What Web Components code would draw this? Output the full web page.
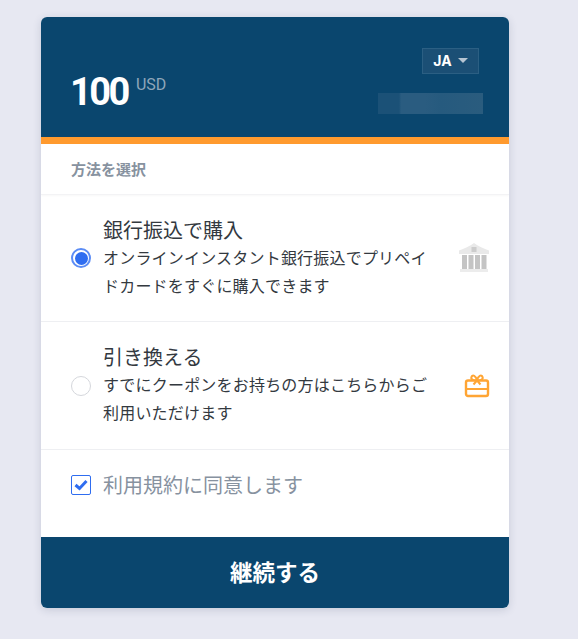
<!DOCTYPE html>
<html lang="ja">
<head>
<meta charset="utf-8">
<title>Purchase</title>
<style>
    html, body { margin: 0; background: #e7e8f2; }
    body { font-family: "Noto Sans CJK JP", "Noto Sans", sans-serif; height: 639px; overflow: hidden; }
</style>
</head>
<body>
<pay-card>
    <pay-header slot="header" amount="100" currency="USD" lang-code="JA"></pay-header>
    <pay-section slot="body">方法を選択</pay-section>
    <pay-option slot="body" title="銀行振込で購入" checked icon="bank">オンラインインスタント銀行振込でプリペイドカードをすぐに購入できます</pay-option>
    <pay-option slot="body" title="引き換える" icon="gift">すでにクーポンをお持ちの方はこちらからご利用いただけます</pay-option>
    <pay-terms slot="body">利用規約に同意します</pay-terms>
    <pay-button slot="footer">継続する</pay-button>
</pay-card>

<script>
const icons = {
    bank: `<svg width="32" height="30" viewBox="0 0 32 30">
        <path d="M16 0 C20 3 26 6 31 7.500 V11 H1 V7.500 C6 6 12 3 16 0 Z" fill="#e9e9e9"/>
        <rect x="13.500" y="4" width="5" height="5" fill="#cccccc"/>
        <g fill="#c4c4c4">
            <rect x="4" y="12" width="5" height="14"/>
            <rect x="10.500" y="12" width="5" height="14"/>
            <rect x="17" y="12" width="5" height="14"/>
            <rect x="23.500" y="12" width="5" height="14"/>
        </g>
        <rect x="2" y="26" width="28" height="3" fill="#ececec"/>
    </svg>`,
    gift: `<svg width="26" height="24" viewBox="0 0 26 24" fill="none" stroke="#ffa534" stroke-width="2.400">
        <rect x="2" y="6.500" width="22" height="15.500" rx="2"/>
        <path d="M2 15 H24" stroke-width="2"/>
        <path d="M13 6.500 C9 6.500 6.500 5 7.500 2.800 C8.500 0.500 12 1.500 13 6.500 C14 1.500 17.500 0.500 18.500 2.800 C19.500 5 17 6.500 13 6.500 Z" stroke-width="2"/>
        <path d="M13 6.500 L9.500 10.500 M13 6.500 L16.500 10.500" stroke-width="2"/>
    </svg>`
};

class PayCard extends HTMLElement {
    connectedCallback() {
        this.attachShadow({ mode: 'open' });
        this.shadowRoot.innerHTML = `
            <style>
                :host { display: block; padding: 17px 0 0 41px; }
                .card {
                    width: 468px;
                    height: 591px;
                    display: flex;
                    flex-direction: column;
                    background: #fff;
                    border-radius: 6px;
                    overflow: hidden;
                    box-shadow: 0 2px 8px rgba(40, 50, 90, 0.16);
                }
                .body { flex: 1; }
            </style>
            <div class="card">
                <slot name="header"></slot>
                <div class="body"><slot name="body"></slot></div>
                <slot name="footer"></slot>
            </div>
        `;
    }
}

class PayHeader extends HTMLElement {
    connectedCallback() {
        this.attachShadow({ mode: 'open' });
        this.shadowRoot.innerHTML = `
            <style>
                :host {
                    display: flex;
                    justify-content: space-between;
                    box-sizing: border-box;
                    height: 127px;
                    padding: 31px 26px 0 30px;
                    background: #0a466e;
                    border-bottom: 7px solid #ff9a2e;
                    font-family: Roboto, "Liberation Sans", sans-serif;
                }
                .price { display: flex; align-items: flex-start; padding-top: 21px; color: #fff; }
                .amount { font-size: 38px; line-height: 46px; font-weight: 700; letter-spacing: -2.500px; margin-left: -1px; }
                .currency { font-size: 16px; line-height: 18px; margin: 7px 0 0 8px; color: #8fa6ba; }
                .side { display: flex; flex-direction: column; align-items: flex-end; }
                .lang {
                    box-sizing: border-box;
                    width: 57px;
                    height: 26px;
                    margin-right: 4px;
                    padding-bottom: 2px;
                    display: flex;
                    align-items: center;
                    justify-content: center;
                    gap: 6px;
                    border: 1px solid #2b5f83;
                    background: #1b4f75;
                    color: #fff;
                    font-family: Inter, "Liberation Sans", sans-serif;
                    font-size: 14px;
                    font-weight: 700;
                }
                .caret {
                    border-left: 5px solid transparent;
                    border-right: 5px solid transparent;
                    border-top: 5px solid #b7c5d2;
                }
                .blur {
                    width: 105px;
                    height: 21px;
                    margin-top: 19px;
                    background: linear-gradient(90deg, #1b5177 0 20%, #2a5c80 22% 45%, #265a7e 60%, #2a5c7e 100%);
                }
            </style>
            <div class="price">
                <span class="amount">${this.getAttribute('amount')}</span>
                <span class="currency">${this.getAttribute('currency')}</span>
            </div>
            <div class="side">
                <div class="lang">${this.getAttribute('lang-code')}<span class="caret"></span></div>
                <div class="blur"></div>
            </div>
        `;
    }
}

class PaySection extends HTMLElement {
    connectedCallback() {
        this.attachShadow({ mode: 'open' });
        this.shadowRoot.innerHTML = `
            <style>
                :host {
                    display: block;
                    box-sizing: border-box;
                    height: 51px;
                    padding: 15px 30px 0;
                    font-size: 15px;
                    line-height: 20px;
                    font-weight: 700;
                    color: #87929f;
                    border-bottom: 1px solid #f3f3f5;
                    box-shadow: 0 1px 2px rgba(0, 0, 0, 0.03);
                }
            </style>
            <slot></slot>
        `;
    }
}

class PayOption extends HTMLElement {
    connectedCallback() {
        const checked = this.hasAttribute('checked');
        this.attachShadow({ mode: 'open' });
        this.shadowRoot.innerHTML = `
            <style>
                :host {
                    display: flex;
                    align-items: center;
                    box-sizing: border-box;
                    height: 127px;
                    padding: 0 19px 0 30px;
                    border-bottom: 1px solid #eeeff2;
                    color: #33393f;
                }
                :host([icon="gift"]) { height: 128px; }
                .radio {
                    flex: none;
                    box-sizing: border-box;
                    width: 20px;
                    height: 20px;
                    border-radius: 50%;
                    border: 1px solid #d5d7dc;
                    background: #fff;
                }
                .radio.on { border: 2px solid #5b8cf5; padding: 1.500px; background: #2f6df0 content-box; }
                .text { flex: 1; margin-left: 12px; min-width: 0; }
                .title { font-size: 20px; line-height: 24px; }
                .desc { width: 332px; font-size: 16px; letter-spacing: 0.2px; line-height: 28px; margin-top: 1px; }
                .icon { flex: none; width: 32px; display: flex; justify-content: flex-end; }
            </style>
            <span class="radio ${checked ? 'on' : ''}"></span>
            <div class="text">
                <div class="title">${this.getAttribute('title')}</div>
                <div class="desc"><slot></slot></div>
            </div>
            <span class="icon">${icons[this.getAttribute('icon')]}</span>
        `;
    }
}

class PayTerms extends HTMLElement {
    connectedCallback() {
        this.attachShadow({ mode: 'open' });
        this.shadowRoot.innerHTML = `
            <style>
                :host {
                    display: flex;
                    align-items: center;
                    gap: 12px;
                    padding: 21px 30px 0;
                    font-size: 20px;
                    line-height: 28px;
                    color: #87929f;
                }
                .box {
                    box-sizing: border-box;
                    width: 20px;
                    height: 20px;
                    border: 1px solid #2f6df0;
                    border-radius: 2px;
                    display: flex;
                    align-items: center;
                    justify-content: center;
                }
            </style>
            <span class="box">
                <svg width="14" height="12" viewBox="0 0 14 12" fill="none" stroke="#2f6df0" stroke-width="3">
                    <path d="M1.500 6 L5.500 9.500 L12.500 2"/>
                </svg>
            </span>
            <span><slot></slot></span>
        `;
    }
}

class PayButton extends HTMLElement {
    connectedCallback() {
        this.attachShadow({ mode: 'open' });
        this.shadowRoot.innerHTML = `
            <style>
                :host {
                    display: flex;
                    align-items: center;
                    justify-content: center;
                    box-sizing: border-box;
                    height: 71px;
                    padding-bottom: 4px;
                    background: #0a466e;
                    color: #fff;
                    font-size: 22.500px;
                    font-weight: 700;
                }
            </style>
            <slot></slot>
        `;
    }
}

customElements.define('pay-card', PayCard);
customElements.define('pay-header', PayHeader);
customElements.define('pay-section', PaySection);
customElements.define('pay-option', PayOption);
customElements.define('pay-terms', PayTerms);
customElements.define('pay-button', PayButton);
</script>
</body>
</html>
